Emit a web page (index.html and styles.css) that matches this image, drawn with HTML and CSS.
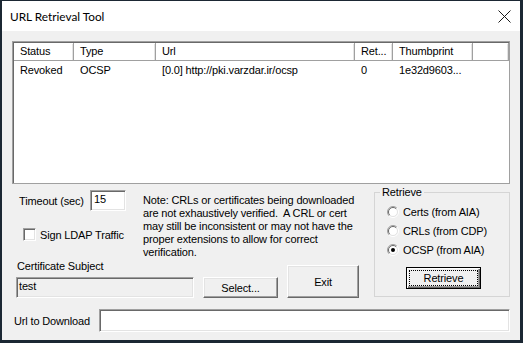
FILE: index.html
```html
<!DOCTYPE html>
<html>
<head>
<meta charset="utf-8">
<link rel="stylesheet" href="styles.css">
</head>
<body>
<div class="window">
  <div class="titlebar">
    <span class="title">URL Retrieval Tool</span>
    <svg class="close" width="13" height="13" viewBox="0 0 13 13"><path d="M0.5 0.5 L12.5 12.5 M12.5 0.5 L0.5 12.5" stroke="#1a1a1a" stroke-width="1" fill="none"/></svg>
  </div>
  <div class="client">
    <div class="list">
      <div class="list-head">
        <div class="th c-status">Status</div>
        <div class="th c-type">Type</div>
        <div class="th c-url">Url</div>
        <div class="th c-ret">Ret...</div>
        <div class="th c-thumb">Thumbprint</div>
        <div class="th c-fill"></div>
      </div>
      <div class="list-row">
        <div class="td c-status">Revoked</div>
        <div class="td c-type">OCSP</div>
        <div class="td c-url">[0.0] http://pki.varzdar.ir/ocsp</div>
        <div class="td c-ret">0</div>
        <div class="td c-thumb">1e32d9603...</div>
      </div>
    </div>
    <div class="lower">
      <div class="main">
        <div class="upper">
          <div class="controls">
            <div class="timeout-row">
              <span class="lbl-timeout">Timeout (sec)</span>
              <div class="edit timeout">15</div>
            </div>
            <div class="check-row">
              <span class="checkbox"></span>
              <span class="check-lbl">Sign LDAP Traffic</span>
            </div>
          </div>
          <p class="note">Note: CRLs or certificates being downloaded<br>are not exhaustively verified.&nbsp; A CRL or cert<br>may still be inconsistent or may not have the<br>proper extensions to allow for correct<br>verification.</p>
        </div>
        <div class="bottom">
          <div class="subject">
            <div class="subject-lbl">Certificate Subject</div>
            <div class="edit subject-edit">test</div>
          </div>
          <div class="btn select">Select...</div>
          <div class="btn exit">Exit</div>
        </div>
      </div>
      <fieldset class="group">
        <legend>Retrieve</legend>
        <div class="radio-row first">
          <svg class="radio" width="12" height="12" viewBox="0 0 12 12"><circle cx="6" cy="6" r="4.5" fill="#fff"/><path d="M2.1 9.9 A5.5 5.5 0 0 1 9.9 2.1" stroke="#a0a0a0" fill="none"/><path d="M2.8 9.2 A4.5 4.5 0 0 1 9.2 2.8" stroke="#696969" fill="none"/><path d="M9.9 2.1 A5.5 5.5 0 0 1 2.1 9.9" stroke="#ffffff" fill="none"/><path d="M9.2 2.8 A4.5 4.5 0 0 1 2.8 9.2" stroke="#e3e3e3" fill="none"/></svg>
          <span>Certs (from AIA)</span>
        </div>
        <div class="radio-row">
          <svg class="radio" width="12" height="12" viewBox="0 0 12 12"><circle cx="6" cy="6" r="4.5" fill="#fff"/><path d="M2.1 9.9 A5.5 5.5 0 0 1 9.9 2.1" stroke="#a0a0a0" fill="none"/><path d="M2.8 9.2 A4.5 4.5 0 0 1 9.2 2.8" stroke="#696969" fill="none"/><path d="M9.9 2.1 A5.5 5.5 0 0 1 2.1 9.9" stroke="#ffffff" fill="none"/><path d="M9.2 2.8 A4.5 4.5 0 0 1 2.8 9.2" stroke="#e3e3e3" fill="none"/></svg>
          <span>CRLs (from CDP)</span>
        </div>
        <div class="radio-row">
          <svg class="radio" width="12" height="12" viewBox="0 0 12 12"><circle cx="6" cy="6" r="4.5" fill="#fff"/><path d="M2.1 9.9 A5.5 5.5 0 0 1 9.9 2.1" stroke="#a0a0a0" fill="none"/><path d="M2.8 9.2 A4.5 4.5 0 0 1 9.2 2.8" stroke="#696969" fill="none"/><path d="M9.9 2.1 A5.5 5.5 0 0 1 2.1 9.9" stroke="#ffffff" fill="none"/><path d="M9.2 2.8 A4.5 4.5 0 0 1 2.8 9.2" stroke="#e3e3e3" fill="none"/><circle cx="6" cy="6" r="2" fill="#000"/></svg>
          <span>OCSP (from AIA)</span>
        </div>
        <div class="btn default retrieve"><span class="focus">Retrieve</span></div>
      </fieldset>
    </div>
    <div class="url-row">
      <span class="url-lbl">Url to Download</span>
      <div class="edit url-edit"></div>
    </div>
  </div>
</div>
</body>
</html>
```
FILE: styles.css
```css
html, body {
  margin: 0;
  padding: 0;
}
body {
  background: #1b2733;
  width: 523px;
  height: 343px;
  overflow: hidden;
}
.window {
  margin: 1px 0 0 2px;
  width: 518px;
  height: 339px;
  background: #f0f0f0;
  font-family: "Liberation Sans", Arial, sans-serif;
  font-size: 11px;
  letter-spacing: -0.15px;
  color: #000;
}
.titlebar {
  height: 30px;
  background: #fff;
  display: flex;
  align-items: center;
  justify-content: space-between;
  padding: 0 9px 0 8px;
}
.title {
  font-family: Lato, "Liberation Sans", sans-serif;
  font-size: 11.8px;
  letter-spacing: 0;
  color: #000;
}
.close {
  display: block;
}
.client {
  padding: 10px 10px 0 10px;
}
.list {
  box-sizing: border-box;
  width: 498px;
  height: 143px;
  background: #fff;
  border: 1px solid #a0a0a0;
  box-shadow: inset 1px 1px #696969;
  padding: 1px 0 0 1px;
}
.list-head {
  display: flex;
  height: 18px;
  box-sizing: border-box;
  border-bottom: 1px solid #a0a0a0;
}
.th, .td {
  box-sizing: border-box;
  padding-left: 6px;
  white-space: nowrap;
  overflow: hidden;
  flex: none;
}
.th {
  line-height: 17px;
  border-right: 1px solid #a0a0a0;
  box-shadow: inset 1px 1px #fff, inset -1px 0 #e3e3e3;
}
.c-status { width: 60px; }
.c-type { width: 82px; }
.c-url { width: 199px; }
.c-ret { width: 38px; }
.c-thumb { width: 80px; }
.c-fill { width: 36px; }
.list-row {
  display: flex;
  height: 17px;
  line-height: 17px;
  margin-top: 1px;
}
.lower {
  display: flex;
}
.main {
  width: 347px;
  flex: none;
}
.upper {
  display: flex;
  height: 76px;
}
.controls {
  width: 131px;
  flex: none;
}
.timeout-row {
  display: flex;
  align-items: center;
  margin-top: 6px;
  height: 21px;
}
.lbl-timeout {
  padding-left: 7px;
  width: 78px;
  flex: none;
  white-space: nowrap;
  box-sizing: border-box;
}
.edit {
  box-sizing: border-box;
  background: #fff;
  border: 1px solid;
  border-color: #a0a0a0 #fff #fff #a0a0a0;
  box-shadow: inset 1px 1px #696969, inset -1px -1px #e3e3e3;
  flex: none;
}
.timeout {
  width: 36px;
  height: 21px;
  line-height: 17px;
  padding-left: 3px;
}
.check-row {
  display: flex;
  align-items: center;
  margin-top: 17px;
  height: 13px;
}
.checkbox {
  box-sizing: border-box;
  width: 13px;
  height: 13px;
  flex: none;
  margin-left: 11px;
  background: #fff;
  border: 1px solid;
  border-color: #a0a0a0 #fff #fff #a0a0a0;
  box-shadow: inset 1px 1px #696969, inset -1px -1px #e3e3e3;
}
.check-lbl {
  margin-left: 4px;
  white-space: nowrap;
}
.note {
  margin: 0;
  padding-top: 10px;
  line-height: 13px;
  white-space: nowrap;
}
.bottom {
  display: flex;
  align-items: flex-end;
  height: 38px;
}
.subject {
  width: 182px;
  flex: none;
}
.subject-lbl {
  padding-left: 5px;
  line-height: 13px;
  margin-bottom: 4px;
}
.subject-edit {
  margin-left: 4px;
  width: 178px;
  height: 21px;
  line-height: 17px;
  padding-left: 2px;
  background: #f0f0f0;
}
.btn {
  box-sizing: border-box;
  background: #f0f0f0;
  border: 1px solid;
  border-color: #fff #696969 #696969 #fff;
  box-shadow: inset -1px -1px #a0a0a0, inset 1px 1px #e3e3e3;
  display: flex;
  align-items: center;
  justify-content: center;
  flex: none;
}
.select {
  margin-left: 9px;
  width: 75px;
  height: 21px;
}
.exit {
  margin-left: 9px;
  width: 72px;
  height: 33px;
}
.group {
  box-sizing: border-box;
  margin: 2px 0 0 15px;
  width: 136px;
  height: 111px;
  padding: 0;
  border: 1px solid #d5d5d5;
  min-width: 0;
  flex: none;
}
.group legend {
  margin-left: 5px;
  padding: 0 2px;
  line-height: 13px;
}
.radio-row {
  display: flex;
  align-items: center;
  height: 13px;
  margin-top: 6px;
  padding-left: 12px;
  white-space: nowrap;
}
.radio {
  display: block;
  flex: none;
}
.radio-row span {
  margin-left: 4px;
}
.retrieve {
  margin: 11px 0 0 31px;
  width: 75px;
  height: 22px;
}
.btn.default {
  border: 1px solid #000;
  box-shadow: inset 1px 1px #fff, inset -1px -1px #696969, inset -2px -2px #a0a0a0;
}
.focus {
  box-sizing: border-box;
  width: 69px;
  height: 16px;
  line-height: 14px;
  text-align: center;
  border: 1px dotted #000;
}
.url-row {
  display: flex;
  align-items: center;
  margin-top: 11px;
}
.url-lbl {
  padding-left: 2px;
  width: 87px;
  flex: none;
  white-space: nowrap;
  box-sizing: border-box;
}
.url-edit {
  width: 411px;
  height: 23px;
}
```
